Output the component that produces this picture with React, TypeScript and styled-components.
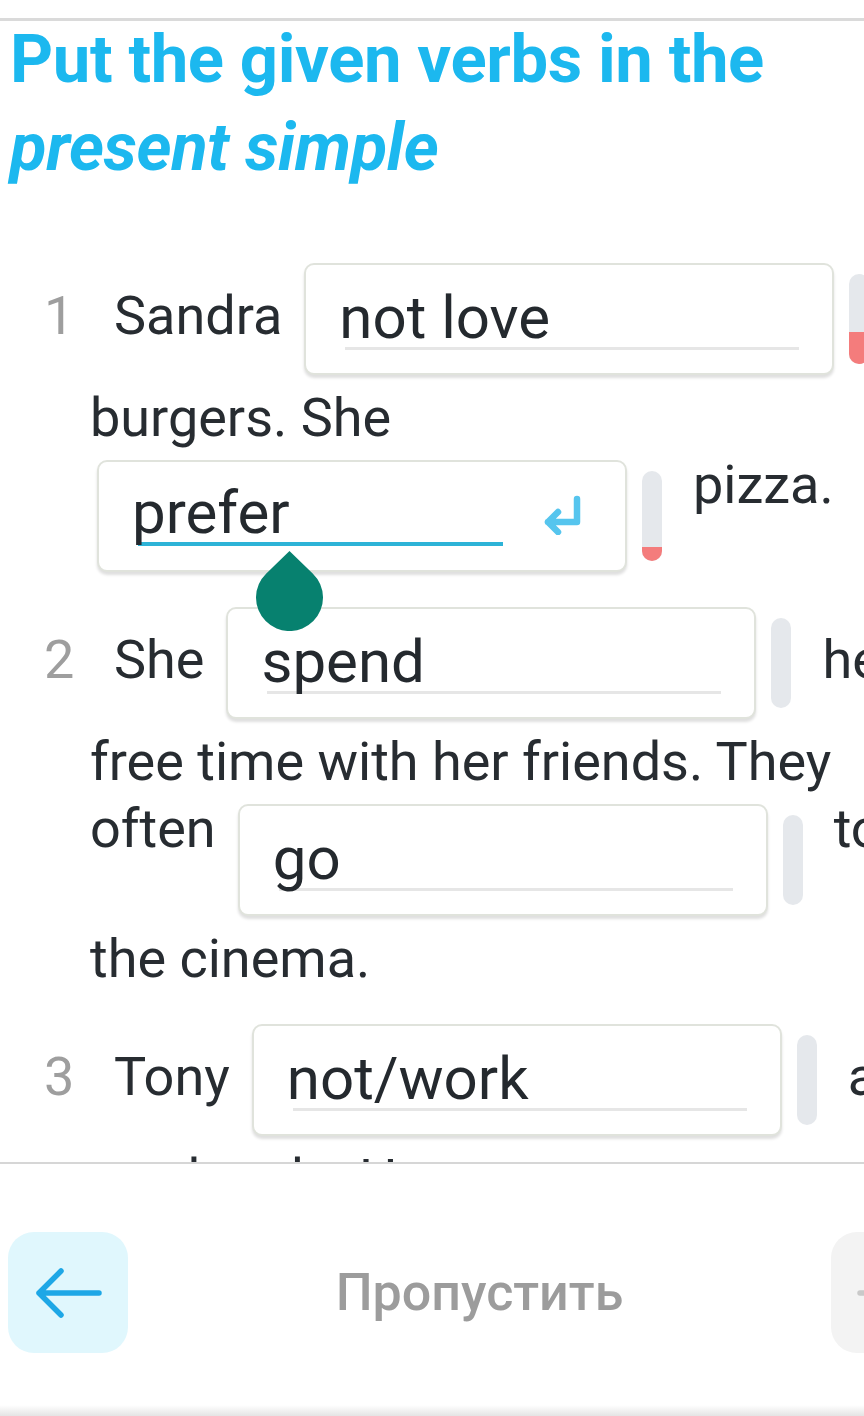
import * as React from 'react';
import styled, { createGlobalStyle } from 'styled-components';

const GlobalStyle = createGlobalStyle`
	html, body {
		margin: 0;
		padding: 0;
		background: #ffffff;
	}

	body {
		font-family: Roboto, 'Noto Sans', sans-serif;
		overflow: hidden;
	}
`;

const Screen = styled.div`
	width: 864px;
	height: 1416px;
	display: flex;
	flex-direction: column;
	overflow: hidden;
	background: #ffffff;
`;

const Scroll = styled.div`
	height: 1162px;
	flex-shrink: 0;
	overflow: hidden;
`;

const TopRule = styled.div`
	margin-top: 18px;
	height: 3px;
	background: #dadada;
`;

const Title = styled.h1`
	margin: -6px 0 0;
	padding-left: 10px;
	font-size: 67px;
	line-height: 88px;
	font-weight: 700;
	color: #1cb8ef;
	letter-spacing: -0.4px;

	em {
		font-style: italic;
	}
`;

const Exercise = styled.div`
	padding-top: 72px;
	display: flex;
	flex-direction: column;
	gap: 35px;
`;

const Item = styled.div`
	display: flex;
	flex-direction: column;
	gap: 12px;
	padding-left: 90px;
`;

const Line = styled.div<{ $boxed?: boolean }>`
	display: flex;
	align-items: flex-start;
	white-space: nowrap;
	height: ${(p) => (p.$boxed ? 112 : 61)}px;
`;

const Words = styled.span<{ $shift?: number }>`
	flex-shrink: 0;
	font-size: 54px;
	line-height: 61px;
	color: #272c31;
	margin-top: ${(p) => p.$shift || 0}px;
`;

const Num = styled(Words)`
	width: 30px;
	margin-left: -46px;
	margin-right: 40px;
	color: #9e9e9e;
	text-align: right;
`;

const Slot = styled.div<{ $lead?: boolean }>`
	flex-shrink: 0;
	display: flex;
	align-items: center;
	gap: 15px;
	margin-left: ${(p) => (p.$lead ? 7 : 22)}px;
	margin-right: 31px;
`;

const Box = styled.div`
	position: relative;
	width: 530px;
	height: 112px;
	box-sizing: border-box;
	border: 2px solid #e0e3dc;
	border-radius: 10px;
	box-shadow: 0 3px 3px rgba(0, 0, 0, 0.13);
	background: #ffffff;
	display: flex;
	align-items: flex-start;
	padding: 0 33px 0 39px;
`;

const Field = styled.div<{ $active?: boolean }>`
	flex: 1;
	margin-top: ${(p) => (p.$active ? 22 : 24)}px;
	border-bottom: ${(p) => (p.$active ? '4px solid #2db3d7' : '3px solid #e6e6e6')};
`;

const Answer = styled.div`
	margin-left: -6px;
	font-size: 60px;
	line-height: 58px;
	color: #24292e;
	white-space: nowrap;
`;

const EnterIcon = styled.svg`
	flex-shrink: 0;
	width: 40px;
	height: 40px;
	margin: 33px 10px 0 39px;
`;

const Handle = styled.svg`
	position: absolute;
	left: 157px;
	top: 89px;
	width: 67px;
	height: 80px;
	z-index: 2;
`;

const Meter = styled.div`
	width: 20px;
	height: 90px;
	border-radius: 10px;
	background: #e5e8ec;
	overflow: hidden;
	display: flex;
	flex-direction: column;
	justify-content: flex-end;
`;

const MeterFill = styled.div<{ $fill: number }>`
	height: ${(p) => p.$fill}px;
	background: #f47c7c;
`;

const Divider = styled.div`
	height: 2px;
	flex-shrink: 0;
	background: #d6d6d6;
`;

const Footer = styled.div`
	flex: 1;
	display: flex;
	flex-direction: column;
`;

const Nav = styled.div`
	display: flex;
	align-items: center;
	padding: 68px 0 0 8px;
`;

const NavButton = styled.div<{ $primary?: boolean }>`
	flex-shrink: 0;
	width: 120px;
	height: 121px;
	border-radius: 26px;
	background: ${(p) => (p.$primary ? '#e0f7fd' : '#f3f3f3')};
	display: flex;
	align-items: center;
	justify-content: center;
`;

const Skip = styled.div`
	flex-shrink: 0;
	width: 703px;
	text-align: center;
	font-size: 52px;
	font-weight: 500;
	color: #9c9c9c;
`;

const BottomShade = styled.div`
	margin-top: auto;
	height: 11px;
	background: linear-gradient(#ffffff, #e4e4e4);
`;

function Arrow({ color, flip }: { color: string; flip?: boolean }) {
	return (
		<svg width="68" height="50" viewBox="0 0 68 50" style={flip ? { transform: 'scaleX(-1)' } : undefined}>
			<path
				d="M65 25 H5 M27 3 L5 25 L27 47"
				fill="none"
				stroke={color}
				strokeWidth="5.5"
				strokeLinecap="round"
				strokeLinejoin="round"
			/>
		</svg>
	);
}

type BlankProps = {
	value: string;
	fill?: number;
	active?: boolean;
	lead?: boolean;
};

function Blank({ value, fill = 0, active, lead }: BlankProps) {
	return (
		<Slot $lead={lead}>
			<Box>
				<Field $active={active}>
					<Answer>{value}</Answer>
				</Field>
				{active && (
					<EnterIcon viewBox="0 0 40 40">
						<path
							d="M35 4 V27 H6 M16 17 L6 27 L16 37"
							fill="none"
							stroke="#56c5ee"
							strokeWidth="6.5"
							strokeLinecap="round"
							strokeLinejoin="round"
						/>
					</EnterIcon>
				)}
				{active && (
					<Handle viewBox="0 0 67 80">
						<path d="M33.5 0 L56.7 22.4 A33.5 33.5 0 1 1 10.3 22.4 Z" fill="#07816f" />
					</Handle>
				)}
			</Box>
			<Meter>
				<MeterFill $fill={fill} />
			</Meter>
		</Slot>
	);
}

export default function App() {
	return (
		<Screen>
			<GlobalStyle />
			<Scroll>
				<TopRule />
				<Title>
					Put the given verbs in the <em>present simple</em>
				</Title>
				<Exercise>
					<Item>
						<Line $boxed>
							<Num $shift={22}>1</Num>
							<Words $shift={22}>Sandra</Words>
							<Blank value="not love" fill={32} />
						</Line>
						<Line>
							<Words>burgers. She</Words>
						</Line>
						<Line $boxed>
							<Blank value="prefer" fill={14} active lead />
							<Words $shift={-6}>pizza.</Words>
						</Line>
					</Item>
					<Item>
						<Line $boxed>
							<Num $shift={22}>2</Num>
							<Words $shift={22}>She</Words>
							<Blank value="spend" />
							<Words $shift={22}>her</Words>
						</Line>
						<Line>
							<Words>free time with her friends. They</Words>
						</Line>
						<Line $boxed>
							<Words $shift={-6}>often</Words>
							<Blank value="go" />
							<Words $shift={-6}>to</Words>
						</Line>
						<Line>
							<Words>the cinema.</Words>
						</Line>
					</Item>
					<Item>
						<Line $boxed>
							<Num $shift={22}>3</Num>
							<Words $shift={22}>Tony</Words>
							<Blank value="not/work" />
							<Words $shift={22}>at</Words>
						</Line>
						<Line>
							<Words>weekends. He</Words>
						</Line>
					</Item>
				</Exercise>
			</Scroll>
			<Divider />
			<Footer>
				<Nav>
					<NavButton $primary>
						<Arrow color="#1ea7e6" />
					</NavButton>
					<Skip>Пропустить</Skip>
					<NavButton>
						<Arrow color="#c9c9c9" flip />
					</NavButton>
				</Nav>
				<BottomShade />
			</Footer>
		</Screen>
	);
}
